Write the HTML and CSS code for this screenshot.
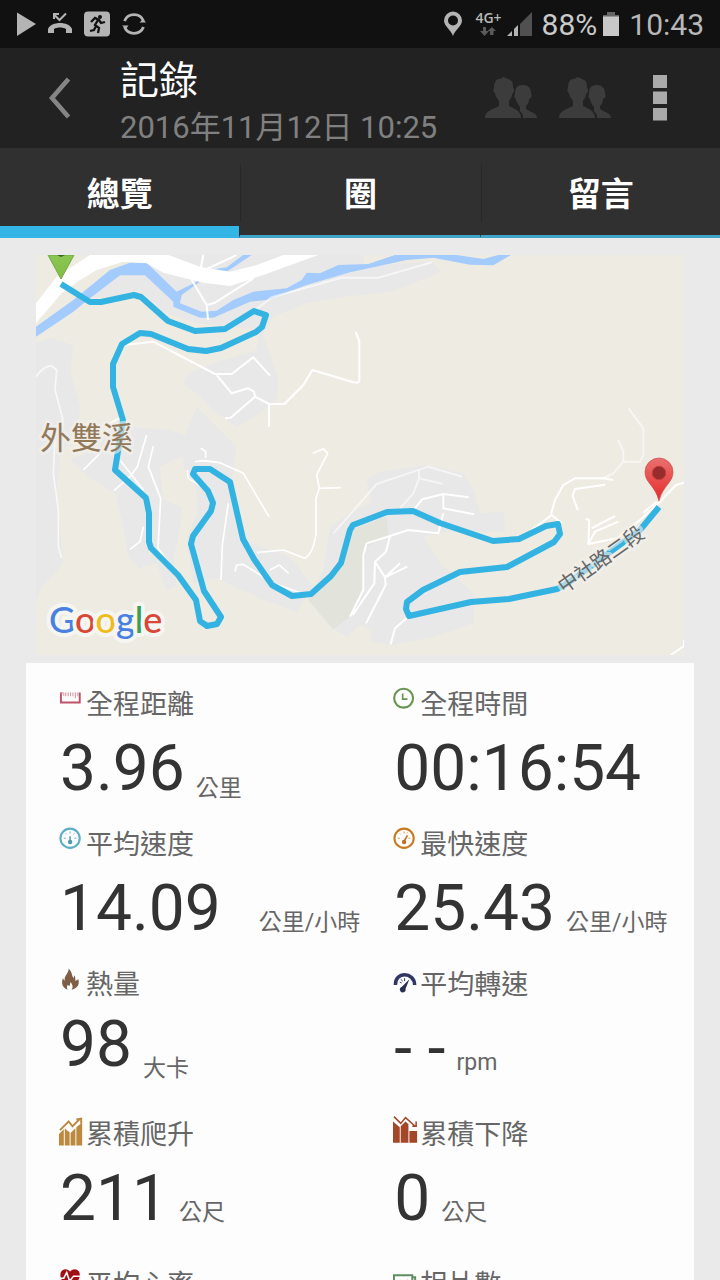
FILE: index.html
```html
<!DOCTYPE html>
<html lang="zh-Hant">
<head>
<meta charset="utf-8">
<meta name="viewport" content="width=device-width, initial-scale=1">
<title>記錄</title>
<link rel="stylesheet" href="styles.css">
</head>
<body>
<div class="status">
  <div class="status-left">
    <svg width="20" height="26" viewBox="0 0 20 26"><path d="M1 1.500L20 13 1 25Z" fill="#b4b4b4"/></svg>
    <svg width="24" height="26" viewBox="0 0 24 26"><path d="M0 22v-4c3-8 21-8 24 0v4h-6v-4c-3-2-9-2-12 0v4z" fill="#b4b4b4"/><path d="M6 3.500l5.500 5.500L18 2.500M6 8V3h5" fill="none" stroke="#b4b4b4" stroke-width="2"/></svg>
    <svg width="26" height="26" viewBox="0 0 26 26"><rect y="0.500" width="26" height="25" rx="4" fill="#b4b4b4"/><circle cx="16" cy="6" r="2" fill="#111"/><path d="M7 11l4-4 4 2 2 3 4-1M14 9l-3 5 4 3-1 5M12 15l-2 4-4 1" fill="none" stroke="#111" stroke-width="2.300"/></svg>
    <svg width="24" height="26" viewBox="0 0 24 26"><path d="M2.500 10a10.300 10.300 0 0 1 19 0M21.500 16a10.300 10.300 0 0 1-19 0" fill="none" stroke="#b4b4b4" stroke-width="2.800"/><path d="M0 14.500h6.500L4 18zM24 11.500h-6.500L21 8z" fill="#b4b4b4"/></svg>
  </div>
  <div class="status-right">
    <svg class="pin" width="20" height="26" viewBox="0 0 20 26"><path fill-rule="evenodd" d="M10 25C8 19 1 15 1 9.500a9 9 0 0 1 18 0C19 15 12 19 10 25ZM10 4.500a5 5 0 1 0 0 10 5 5 0 0 0 0-10Z" fill="#b4b4b4"/></svg>
    <div class="network"><span>4G+</span><svg width="16" height="9" viewBox="0 0 16 9"><path d="M3 0h3v4h3L4.500 9 0 4h3zM10 8V4H7.500L12 0l4 4h-2.500v4z" fill="#5a5a5a"/></svg></div>
    <svg class="signal" width="26" height="26" viewBox="0 0 26 26"><path d="M13 13L25 1v24H13z" fill="#505050"/><path d="M0 25l5-5v5zM7 18l4-4v11H7z" fill="#b4b4b4"/></svg>
    <span class="percent">88%</span>
    <svg class="battery" width="18" height="26" viewBox="0 0 18 26"><path d="M5 1h8v3h4v2H1V4h4z" fill="#666"/><path d="M1 5.500h16V25H1z" fill="#c8c8c8"/></svg>
    <span class="clock">10:43</span>
  </div>
</div>
<header class="bar">
  <button class="back" aria-label="返回"><svg width="24" height="42" viewBox="0 0 24 42"><path d="M20.500 2L4 21 20.500 40" fill="none" stroke="#858585" stroke-width="4.600"/></svg></button>
  <div class="heading"><h1>記錄</h1><p>2016年11月12日 10:25</p></div>
  <div class="actions">
    <button aria-label="好友"><svg width="52" height="42" viewBox="0 0 52 42"><path id="people" d="M0 41c0-7 6-8 14-12v-5c-2-3-4-5-4-8-2-1-2-4-1-5 0-5 2-10 7-9l2-2 3 1 4 2c3 1 3 5 3 8 2 1 1 5-1 6 0 4-2 5-3 7v5c6 3 12 5 12 12ZM38 41h14c0-5-5-5-11-9v-3c2-2 3-4 3-7 3-1 3-4 2-6 0-5-3-8-8-8-6 0-8 3-8 9-1 2-1 4 1 5 0 3 2 5 4 8v3c-2 1 4 3 3 8Z" fill="#3c3c3c"/></svg></button>
    <button aria-label="群組"><svg width="52" height="42" viewBox="0 0 52 42"><use href="#people"/></svg></button>
    <button class="more" aria-label="更多"><svg width="14" height="46" viewBox="0 0 14 46"><path d="M0 0h14v13H0zM0 16.500h14v12.500H0zM0 33h14v12.500H0z" fill="#aaa"/></svg></button>
  </div>
</header>
<nav class="tabs">
  <button class="tab active"><span>總覽</span></button>
  <button class="tab"><span>圈</span></button>
  <button class="tab"><span>留言</span></button>
</nav>
<main>
  <svg class="map" viewBox="36 255 648 400" role="img" aria-label="路線地圖">
    <defs>
      <linearGradient id="red" x2="0" y2="1"><stop stop-color="#ea7070"/><stop offset="1" stop-color="#e52b2b"/></linearGradient>
      <linearGradient id="green" x2="0" y2="1"><stop stop-color="#8ac653"/><stop offset="1" stop-color="#82bd42"/></linearGradient>
    </defs>
    <rect x="36" y="255" width="648" height="400" fill="#eeebe2"/>
    <g transform="translate(30 240) scale(.33333)" fill="#e8e8e8">
      <path d="M180 170L290 80 400 45H1000L1005 75 1205 65 1235 95 1150 130 1080 155 960 168 830 190 730 230 700 280 745 420 740 480 690 520 620 560 550 510 510 470 460 430 475 400 550 370 680 330 690 270 500 250 400 215 330 150 240 170Z"/>
      <path d="M18 310L60 295 130 315 120 390 150 500 145 560 90 650 80 760 100 970 30 1050 18 1080Z"/>
      <path d="M240 550L290 560 420 570 500 600 500 640 430 660 390 680 400 780 455 800 450 870 430 950 440 1040 410 1050 380 970 330 985 295 950 280 860 255 760 190 720 120 660 210 620Z"/>
      <path d="M460 600L500 500 570 570 620 620 600 760 640 900 780 950 850 1040 800 1115 700 1080 560 1015 490 1030 470 900 500 820 500 750 460 680Z"/>
    </g>
    <g transform="translate(350 440) scale(.33333)">
      <path d="M-80 390L-60 260 0 220 65 185 50 120 90 95 230 75 340 100 370 150 390 220 460 215 465 275 300 275 220 290 270 370 370 460 370 550 250 590 130 615 60 605 65 570 30 555 -10 590 -60 560 -125 480Z" fill="#e8e8e8"/>
      <path d="M-125 480L-60 400 -20 350 0 270 110 230 115 285 45 325 40 440 0 530 -50 568Z" fill="#e2e4dc"/>
    </g>
    <g transform="translate(30 240) scale(.33333)" fill="none" stroke="#fff" stroke-width="6" stroke-linejoin="round">
      <path stroke="none" fill="#a3cbfd" d="M18 260L130 180 240 90 300 68H350L440 155 500 125 540 90 590 82 640 45H665L590 95 510 125 455 165 450 190 515 215 560 212 610 180 670 155 770 145 815 120 830 98 870 100 925 75 1015 72 1095 45H1280L1360 57 1405 45H1443L1390 76 1320 74 1210 53 1130 60 960 97 830 135 710 180 660 185 550 233H510L430 200V185L345 106H270L180 175 130 215 18 290Z"/>
      <path stroke="none" fill="#fff" d="M18 190L80 110 180 45H415L510 80 600 95 680 75 760 45H865L700 105 600 138 520 128 400 98 350 70 280 65 200 90 150 120 95 160 18 250Z"/>
      <path stroke-width="5" d="M18 410Q45 375 65 378L80 390 75 450 98 535V560M75 600L70 700 85 810 85 920 95 955" opacity=".7"/>
      <path d="M520 45L512 85M620 45L520 92M485 120L530 195 534 240M530 195L555 188 670 115" />
      <path d="M670 215L725 172 935 113H1045L1206 67" opacity=".6"/>
      <path d="M280 315L370 305 555 402H605L670 352 720 407M560 405L605 460 655 445 672 455 675 470 602 533 585 535M675 470L717 492V560M717 492H763L820 435 847 390 970 427Q988 430 988 423V305L977 276"/>
      <path stroke-width="5" d="M240 550L285 525M210 640L160 690M350 585L322 680 300 710 252 752M370 618L355 680 392 775 384 925 440 1000M270 660L340 750M340 860L330 905 300 928M512 625L527 634V653M495 665L520 662 570 668 640 700 717 830M472 690L475 715 530 750M595 790L577 915 573 1020M680 938L760 930 825 955Q850 940 858 882V775L868 745 932 743M868 745L860 705 893 640 880 626 848 640M615 995L620 975 640 973 730 1030 830 1065M720 990L748 975 776 1000"/>
    </g>
    <g transform="translate(350 440) scale(.33333)" fill="none" stroke="#fff" stroke-width="6" stroke-linejoin="round">
      <path opacity=".55" d="M-50 280L-10 235 80 132 235 80 337 110M207 90V115L277 131M207 115L190 160 150 205M805 0L820 35V65L790 100 755 117M836-95L880-35V45L870 65H815"/>
      <path d="M190 210L217 178 280 162 356 172M280 162V205L372 223M280 220L265 280 175 270 120 288 50 310 40 345V450L0 530M120 288L108 335 75 365 73 430 8 525M75 365L105 412 107 435 48 550M105 412L172 380M105 412L150 370M175 530L135 565 122 613M505 300L605 225 635 250M603 222L615 180 640 135 675 115H760L790 120M765 134L675 147 668 167 683 210M707 237L718 240 715 312 800 295 870 240 930 185 978 135 1002 128M715 312L735 275 805 245M725 265L795 228M962 645L1002 618V600M880 218L920 185"/>
    </g>
    <path d="M61 284L90 302H101L134 295 141 297 168 321 195 331 225 329 254 311 266 315 262 327 256 332 221 348 206 351 188 349 151 334 140 333 122 344 113 364V387L123 420 115 470 146 498 149 513V542L151 548 178 575 196 600 200 621 207 626 217 624 221 617 204 591 191 544 193 536 211 511 213 503 208 491 193 474 195 469H210L230 482 243 539 254 559 272 585 292 596 311 594 331 576 341 563 350 530 353 525 387 512 413 511 440 523 493 541 519 539 546 526 558 524 560 534 554 542 507 567 460 572 423 590 407 602 406 609 409 616 471 602 509 599 557 589 568 583 640 530 659 507" fill="none" stroke="#33b3e1" stroke-width="6" stroke-linejoin="round"/>
    <path d="M48 255H74L61 279Z" fill="url(#green)" stroke="#71a741"/><path d="M57 255h8l-4 2z" fill="#386429"/>
    <path d="M659 501C655 485 645 483 645 472a14 14 0 0 1 28 0C673 483 663 485 659 501Z" fill="url(#red)" stroke="#c74646" stroke-width=".6"/><circle cx="659" cy="473" r="6.700" fill="#982b2b" stroke="#c13d3d"/>
    <text class="place" x="40" y="449">外雙溪</text>
    <text class="road" transform="translate(564 594) rotate(-35)">中社路二段</text>
    <text class="google" x="49" y="633"><tspan fill="#4a80e0">G</tspan><tspan fill="#d84838">o</tspan><tspan fill="#f0bb1c">o</tspan><tspan fill="#4a80e0">g</tspan><tspan fill="#3b9e54">l</tspan><tspan fill="#d84838">e</tspan></text>
  </svg>
  <section class="card">
    <article>
      <h2><svg viewBox="0 0 28 40"><path d="M2 8V18.500H21.500V8" fill="none" stroke="#bf526a" stroke-width="2"/><path d="M1 8.500h4v3M7 8v4M9.500 8v4M12 8v4M14.500 8v4M17 8v6M19.500 8v4" fill="none" stroke="#d58998"/></svg>全程距離</h2>
      <div class="reading"><strong>3.96</strong><span class="low">公里</span></div>
    </article>
    <article>
      <h2><svg viewBox="0 0 28 40"><circle cx="11" cy="14" r="9.800" fill="none" stroke="#67954f" stroke-width="2.200"/><path d="M10 9v6h5" fill="none" stroke="#67954f" stroke-width="1.700"/></svg>全程時間</h2>
      <div class="reading"><strong>00:16:54</strong></div>
    </article>
    <article>
      <h2><svg viewBox="0 0 28 40"><circle cx="11.500" cy="14" r="10" fill="none" stroke="#5caec2" stroke-width="2.200"/><path d="M5 14h2M16 14h2M7 9l1 1M15 10l1-1M11.500 7v2" stroke="#5caec2"/><path d="M11.500 12v6" stroke="#4c99b3" stroke-width="1.500"/><circle cx="11.500" cy="18" r="2.300" fill="#4c99b3"/></svg>平均速度</h2>
      <div class="reading spaced"><strong>14.09</strong><span>公里/小時</span></div>
    </article>
    <article>
      <h2><svg viewBox="0 0 28 40"><circle cx="11.500" cy="14" r="10" fill="none" stroke="#c77b20" stroke-width="2.200"/><path d="M5 14h2M16 14h2M7 9l1 1M11.500 7v2M14 9l1-1" stroke="#d59240"/><path d="M15 11l-4 7" stroke="#c3701c" stroke-width="1.700"/><circle cx="11.500" cy="18" r="2.300" fill="#c3701c"/></svg>最快速度</h2>
      <div class="reading"><strong>25.43</strong><span>公里/小時</span></div>
    </article>
    <article class="tall">
      <h2><svg viewBox="0 0 28 40"><path d="M9 26C4 24 2 20 4 14l2 3C5 11 10 10 10 4c4 4 3 7 5 10l1-3c1 2 1 4 1 6l3-2c2 6-2 10-7 11 2-3 1-5-1-8l-1 4-2-1c-1 2-1 3 0 5Z" fill="#805e45"/></svg>熱量</h2>
      <div class="reading raised"><strong>98</strong><span class="low">大卡</span></div>
    </article>
    <article class="tall">
      <h2><svg viewBox="0 0 28 40"><path d="M2.500 21C2 7 22 7 22.500 21" fill="none" stroke="#303765" stroke-width="3.600"/><path d="M7 18l2 1M12 14v3M8 15l2 2" stroke="#303765"/><path d="M17 15L9 23a3 3 0 1 0 4 2z" fill="#283052"/></svg>平均轉速</h2>
      <div class="reading"><strong>- -</strong><span>rpm</span></div>
    </article>
    <article class="tall">
      <h2><svg viewBox="0 0 28 40"><path d="M0 20l5-5v17H0zM6 14l3 3 2 1v14H6zM12 19l5-5v18h-5zM18 13l6-5v24h-6z" fill="#bc8a3f"/><path d="M1 16L10 7l4 5 8-8M18 5l5-1v5" fill="none" stroke="#bc8a3f" stroke-width="2"/></svg>累積爬升</h2>
      <div class="reading"><strong>211</strong><span>公尺</span></div>
    </article>
    <article class="tall">
      <h2><svg viewBox="0 0 28 40"><path d="M0 7l7 6v16H0zM8 12l5-5 3 3v19H8zM17 17h8v12h-8z" fill="#a44729"/><path d="M1 2l7 7 5-6 10 9M20 12h4V7" fill="none" stroke="#a44729" stroke-width="1.600"/></svg>累積下降</h2>
      <div class="reading"><strong>0</strong><span>公尺</span></div>
    </article>
    <article>
      <h2><svg viewBox="0 0 28 40"><path d="M11.500 26L3 16C-2 7 6 1 11.500 7 17 1 25 7 20 16Z" fill="#a30e14"/><path d="M0 14h5l3-6 3 9 4-5h8" fill="none" stroke="#fff" stroke-width="1.600"/></svg>平均心率</h2>
      <div class="reading"><strong>- -</strong><span>bpm</span></div>
    </article>
    <article>
      <h2><svg viewBox="0 0 28 40"><path d="M1 11h19v14H1zM21 13h2v14H4v-2" fill="none" stroke="#5c8e62" stroke-width="2"/><path d="M4 22l4-5 4 4 4-5" fill="none" stroke="#5c8e62" stroke-width="2"/></svg>相片數</h2>
      <div class="reading"><strong>0</strong></div>
    </article>
  </section>
</main>
</body>
</html>
```
FILE: styles.css
```css
* { box-sizing: border-box; }
body {
  margin: 0;
  height: 100vh;
  display: flex;
  flex-direction: column;
  background: #eaeaea;
  color: #333;
  font-family: Roboto, "Noto Sans CJK TC", sans-serif;
}
h1, h2, p { margin: 0; font-weight: 400; }
button {
  border: 0;
  padding: 0;
  background: none;
  color: inherit;
  font: inherit;
}
svg { display: block; flex: none; }

.status {
  flex: none;
  height: 48px;
  padding: 0 16px;
  display: flex;
  align-items: center;
  justify-content: space-between;
  background: #111;
  color: #b8b8b8;
  font-size: 30px;
}
.status-left { display: flex; align-items: center; gap: 12px; }
.status-right { display: flex; align-items: center; }
.network {
  display: flex;
  flex-direction: column;
  align-items: center;
  gap: 3px;
  margin: 0 5px 0 12px;
  font-family: "Open Sans", sans-serif;
  font-size: 14px;
  line-height: 12px;
  font-weight: 600;
}
.percent { margin: 0 5px 0 9px; color: #cacaca; }
.clock { margin-left: 9px; }

.bar {
  flex: none;
  height: 100px;
  display: flex;
  align-items: center;
  background: #222;
}
.back { width: 120px; height: 100%; display: grid; place-items: center; }
.heading { flex: 1; padding-top: 6px; }
.heading h1 { font-size: 39px; line-height: 54px; color: #fff; }
.heading p { font-size: 31px; line-height: 40px; color: #808080; white-space: nowrap; }
.actions { display: flex; align-items: center; gap: 22px; padding-right: 53px; }
.more { margin-left: 20px; }

.tabs { flex: none; height: 90px; display: flex; background: #303030; }
.tab {
  flex: 1;
  display: flex;
  border-bottom: 3px solid #40a3ca;
  color: #fff;
  font-size: 33px;
  font-weight: 700;
}
.tab + .tab { border-left: 1px solid #303030; }
.tab span {
  flex: 1;
  height: 58px;
  margin-top: 16px;
  padding-top: 2px;
  line-height: 58px;
}
.tab + .tab span { border-left: 1px solid #282828; }
.tab.active { border-bottom: 12px solid #33b5e5; }

main { flex: 1; min-height: 0; overflow: auto; scrollbar-width: none; padding: 17px 26px 0; }
.map { width: calc(100% - 20px); height: auto; margin: 0 10px 8px; }
.place, .road, .google { paint-order: stroke; stroke-linejoin: round; }
.place { font-size: 31px; fill: #92795a; stroke: #f3f1ec99; stroke-width: 6px; }
.road { font-size: 20px; fill: #666; stroke: #f3f1ec99; stroke-width: 6px; }
.google { font-family: Lato, sans-serif; font-size: 36px; font-weight: 500; stroke: #f5f6f2; stroke-width: 8px; }

.card { display: grid; grid-template-columns: 1fr 1fr; padding-top: 21px; background: #fdfdfd; }
.card article { padding-left: 33px; height: 140px; }
.card .tall { height: 150px; }
.card h2 { display: flex; height: 40px; font-size: 27px; line-height: 42px; color: #666; }
.card h2 svg { width: 27px; height: 40px; }
.reading { display: flex; align-items: baseline; gap: 11px; padding-left: 1px; line-height: 90px; white-space: nowrap; }
.reading strong { font-size: 64px; font-weight: 400; }
.reading span { font-size: 23px; color: #666; }
.reading .low { padding-top: 6px; align-self: flex-start; line-height: 118px; }
.spaced { gap: 38px; }
.raised { line-height: 82px; }
```
